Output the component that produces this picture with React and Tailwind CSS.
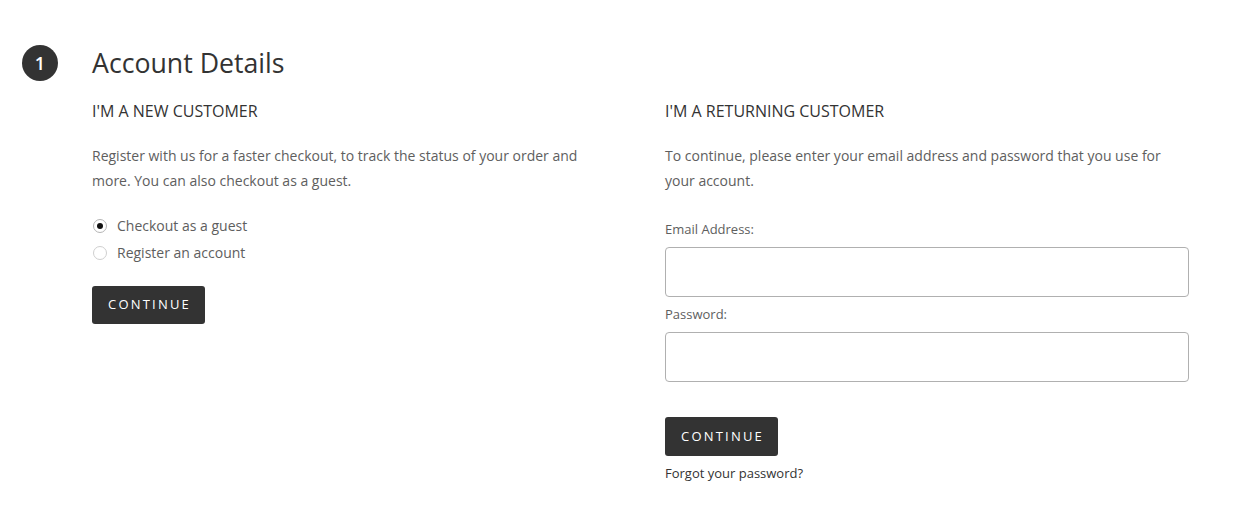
export default function App() {
  const font = { fontFamily: '"Open Sans", "Noto Sans", sans-serif' };
  return (
    <div className="w-[1242px] h-[514px] bg-white text-[#333]" style={font}>
      <div className="pt-[45px]">
        <div className="flex items-center pl-[22px]">
          <div className="w-9 h-9 rounded-full bg-[#333] text-white flex items-center justify-center text-[18px] font-semibold leading-none">1</div>
          <h1 className="ml-[34px] text-[26.7px] leading-[36px] text-[#333] font-normal">Account Details</h1>
        </div>
        <div className="ml-[92px] w-[1097px] grid grid-cols-2 gap-x-[49px]">
          <div className="flex flex-col items-start">
            <h2 className="mt-[18px] text-[16px] leading-[24px] text-[#333]">I'M A NEW CUSTOMER</h2>
            <p className="mt-[20px] text-[14px] leading-[25px] text-[#5e5e5e]">
              Register with us for a faster checkout, to track the status of your order and more. You can also checkout as a guest.
            </p>
            <div className="mt-[19px] flex flex-col">
              <label className="flex items-center h-[27px]">
                <span className="w-[14px] h-[14px] rounded-full border border-[#b5b5b5] bg-white flex items-center justify-center ml-[1px]">
                  <span className="w-[6px] h-[6px] rounded-full bg-[#111]"></span>
                </span>
                <span className="ml-[10px] text-[14px] text-[#5e5e5e]">Checkout as a guest</span>
              </label>
              <label className="flex items-center h-[27px]">
                <span className="w-[14px] h-[14px] rounded-full border border-[#cfcfcf] bg-white ml-[1px]"></span>
                <span className="ml-[10px] text-[14px] text-[#5e5e5e]">Register an account</span>
              </label>
            </div>
            <button className="mt-[20px] h-[38px] w-[113px] rounded-[3px] bg-[#333] text-white text-[13px] tracking-[2.2px] font-normal flex items-center justify-center pl-[2px]">CONTINUE</button>
          </div>
          <div className="flex flex-col items-start">
            <h2 className="mt-[18px] text-[16px] leading-[24px] text-[#333]">I'M A RETURNING CUSTOMER</h2>
            <p className="mt-[20px] text-[14px] leading-[25px] text-[#5e5e5e]">
              To continue, please enter your email address and password that you use for your account.
            </p>
            <label className="mt-[26px] text-[13px] leading-[20px] text-[#5e5e5e]">Email Address:</label>
            <input type="email" className="mt-[8px] w-full h-[50px] rounded-[4px] border border-[#b0b0b0] bg-white outline-none" />
            <label className="mt-[7px] text-[13px] leading-[20px] text-[#5e5e5e]">Password:</label>
            <input type="password" className="mt-[8px] w-full h-[50px] rounded-[4px] border border-[#b0b0b0] bg-white outline-none" />
            <button className="mt-[35px] h-[39px] w-[113px] rounded-[3px] bg-[#333] text-white text-[13px] tracking-[2.2px] font-normal flex items-center justify-center pl-[2px]">CONTINUE</button>
            <a className="mt-[7px] text-[13px] leading-[20px] text-[#333]">Forgot your password?</a>
          </div>
        </div>
      </div>
    </div>
  );
}
